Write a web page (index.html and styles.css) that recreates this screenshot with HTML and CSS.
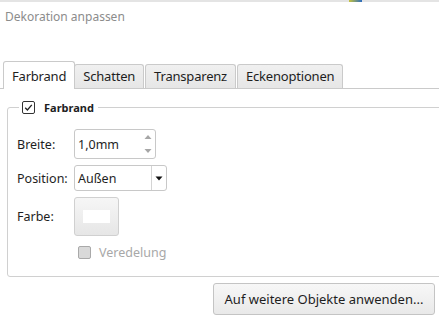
FILE: index.html
```html
<!DOCTYPE html>
<html lang="de">
<head>
<meta charset="utf-8">
<title>Dekoration anpassen</title>
<link rel="stylesheet" href="styles.css">
</head>
<body>
<div class="topbar"><span class="topbar-swatch"></span></div>
<div class="title">Dekoration anpassen</div>
<div class="tabs">
  <div class="tab active">Farbrand</div>
  <div class="tab">Schatten</div>
  <div class="tab">Transparenz</div>
  <div class="tab">Eckenoptionen</div>
</div>
<fieldset class="group">
  <legend class="group-legend">
    <span class="check checked">
      <svg width="13" height="13" viewBox="0 0 13 13"><path d="M3.2 6.8 L5.4 9 L9.8 3.8" fill="none" stroke="#222" stroke-width="1.3"/></svg>
    </span>
    <span class="legend-text">Farbrand</span>
  </legend>
  <div class="form">
    <div class="label">Breite:</div>
    <div class="spinner">
      <span class="field-text">1,0mm</span>
      <span class="spin-arrows">
        <svg width="8" height="20" viewBox="0 0 8 20"><path d="M0.5 5 L4 1 L7.5 5 Z" fill="#a6a6a6"/><path d="M0.5 15 L4 19 L7.5 15 Z" fill="#a6a6a6"/></svg>
      </span>
    </div>
    <div class="label">Position:</div>
    <div class="combo">
      <span class="field-text">Außen</span>
      <span class="combo-btn">
        <svg width="8" height="5" viewBox="0 0 8 5"><path d="M0.5 0.5 L7.5 0.5 L4 4.5 Z" fill="#111"/></svg>
      </span>
    </div>
    <div class="label">Farbe:</div>
    <div class="color-btn"><span class="color-swatch"></span></div>
    <div class="label"></div>
    <div class="disabled-check">
      <span class="check disabled"></span>
      <span class="disabled-text">Veredelung</span>
    </div>
  </div>
</fieldset>
<div class="actions">
  <button class="apply-btn">Auf weitere Objekte anwenden...</button>
</div>
</body>
</html>
```
FILE: styles.css
```css
html, body {
  margin: 0;
  padding: 0;
  background: #ffffff;
  overflow: hidden;
}
body {
  width: 439px;
  height: 323px;
  font-family: "Noto Sans", "Open Sans", sans-serif;
  font-size: 12.5px;
  color: #1e1e1e;
}
.topbar {
  height: 2px;
  background: #e4e4e4;
  position: relative;
}
.topbar-swatch {
  position: absolute;
  left: 349px;
  top: 0;
  width: 13px;
  height: 2px;
  background: linear-gradient(90deg, #c8c43c, #2a6bc0);
}
.title {
  margin-top: 7px;
  padding-left: 5px;
  font-size: 12px;
  line-height: 16px;
  color: #8c8c8c;
}
.tabs {
  margin-top: 36px;
  display: flex;
  align-items: flex-end;
  height: 27px;
  padding-left: 3px;
  border-bottom: 1px solid #cacaca;
}
.tab {
  height: 23px;
  padding: 0 8px;
  border: 1px solid #cacaca;
  border-bottom: none;
  border-radius: 3px 3px 0 0;
  background: linear-gradient(#f0f0f0, #e6e6e6);
  line-height: 23px;
  color: #1e1e1e;
  margin-right: 1px;
  font-size: 13px;
  letter-spacing: -0.2px;
}
.tab.active {
  height: 27px;
  line-height: 29px;
  margin-bottom: -1px;
  margin-right: 0;
  background: #ffffff;
  position: relative;
}
.tab.active + .tab {
  margin-left: -1px;
}
.group {
  margin: 10px -20px 0 7px;
  padding: 0 0 14px 9px;
  border: 1px solid #d0d0d0;
  border-radius: 3px;
}
.group-legend {
  margin-left: 2px;
  padding: 0 4px 0 3px;
  display: flex;
  align-items: center;
  gap: 9px;
  height: 16px;
}
.legend-text {
  font-weight: bold;
  font-size: 11px;
}
.check {
  width: 13px;
  height: 13px;
  box-sizing: border-box;
  border: 1px solid #333333;
  border-radius: 2px;
  background: #ffffff;
  display: inline-flex;
}
.check svg {
  margin: -1px;
}
.check.disabled {
  border-color: #a9a9a9;
  background: #d9d9d9;
}
.form {
  margin-top: 14px;
  display: grid;
  grid-template-columns: 57px auto;
  row-gap: 6px;
  align-items: center;
  justify-items: start;
}
.spinner, .combo {
  box-sizing: border-box;
  border: 1px solid #c8c8c8;
  border-radius: 3px;
  display: flex;
  align-items: center;
  background: #ffffff;
}
.spinner {
  width: 82px;
  height: 30px;
}
.combo {
  width: 93px;
  height: 26px;
}
.field-text {
  flex: 1;
  padding-left: 3px;
}
.spin-arrows {
  width: 8px;
  margin-right: 3px;
  display: flex;
}
.combo-btn {
  width: 14px;
  align-self: stretch;
  border-left: 1px solid #d4d4d4;
  display: flex;
  align-items: center;
  justify-content: center;
}
.color-btn {
  box-sizing: border-box;
  width: 45px;
  height: 39px;
  border: 1px solid #d0d0d0;
  border-radius: 3px;
  background: linear-gradient(#f6f6f6, #e6e6e6);
  display: flex;
  align-items: center;
  justify-content: center;
}
.color-swatch {
  width: 27px;
  height: 13px;
  background: #ffffff;
}
.disabled-check {
  height: 20px;
  margin-left: 4px;
  display: flex;
  align-items: center;
  gap: 8px;
}
.disabled-text {
  color: #a8a8a8;
}
.actions {
  margin-top: 6px;
  display: flex;
  justify-content: flex-end;
  padding-right: 4px;
}
.apply-btn {
  width: 222px;
  height: 32px;
  border: 1px solid #c4c4c4;
  border-radius: 3px;
  background: linear-gradient(#f7f7f7, #e9e9e9);
  font-family: inherit;
  font-size: 13px;
  color: #1e1e1e;
  padding: 0;
}
```
